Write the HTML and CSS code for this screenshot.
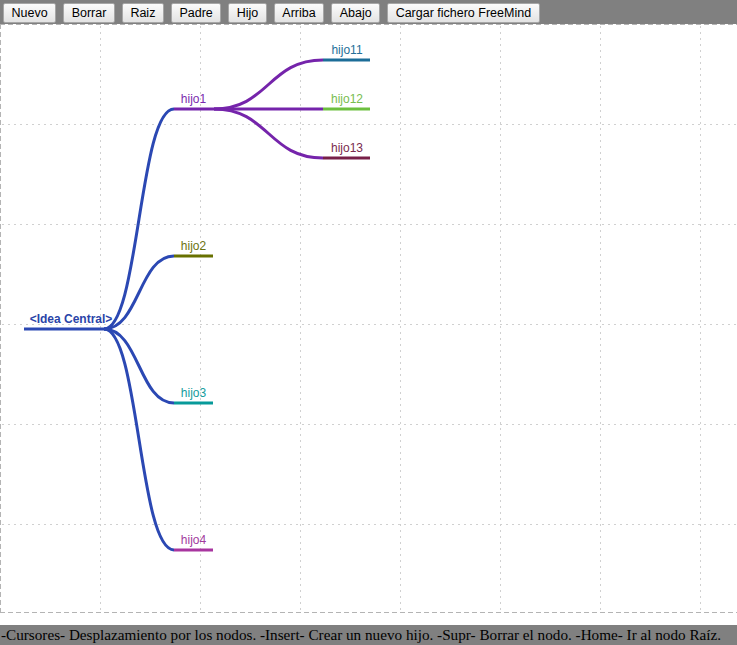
FILE: index.html
```html
<!DOCTYPE html>
<html lang="es">
<head>
<meta charset="utf-8">
<title>Mapa mental</title>
<link rel="stylesheet" href="styles.css">
</head>
<body>
<div class="toolbar">
  <button class="btn">Nuevo</button>
  <button class="btn">Borrar</button>
  <button class="btn">Raiz</button>
  <button class="btn">Padre</button>
  <button class="btn">Hijo</button>
  <button class="btn">Arriba</button>
  <button class="btn">Abajo</button>
  <button class="btn">Cargar fichero FreeMind</button>
</div>
<svg class="canvas" width="737" height="589" viewBox="0 0 737 589" xmlns="http://www.w3.org/2000/svg">
  <g class="frame">
    <line x1="0" y1="0.5" x2="737" y2="0.5"/>
    <line x1="0.5" y1="0" x2="0.5" y2="589"/>
    <line x1="0" y1="588.5" x2="737" y2="588.5"/>
  </g>
  <g class="grid">
    <line x1="100.5" y1="2" x2="100.5" y2="588"/>
    <line x1="200.5" y1="2" x2="200.5" y2="588"/>
    <line x1="300.5" y1="2" x2="300.5" y2="588"/>
    <line x1="400.5" y1="2" x2="400.5" y2="588"/>
    <line x1="500.5" y1="2" x2="500.5" y2="588"/>
    <line x1="600.5" y1="2" x2="600.5" y2="588"/>
    <line x1="700.5" y1="2" x2="700.5" y2="588"/>
    <line x1="2" y1="100.5" x2="737" y2="100.5"/>
    <line x1="2" y1="200.5" x2="737" y2="200.5"/>
    <line x1="2" y1="300.5" x2="737" y2="300.5"/>
    <line x1="2" y1="400.5" x2="737" y2="400.5"/>
    <line x1="2" y1="500.5" x2="737" y2="500.5"/>
  </g>
  <g class="links">
    <path class="c-root" d="M24 305 H104"/>
    <path class="c-root" d="M104 305 C139 305 139 85 174 85"/>
    <path class="c-root" d="M104 305 C139 305 139 232 174 232"/>
    <path class="c-root" d="M104 305 C139 305 139 379 174 379"/>
    <path class="c-root" d="M104 305 C139 305 139 526 174 526"/>
    <path class="c-h1" d="M174 85 H323"/>
    <path class="c-h1" d="M214 85 C268.5 85 268.5 36 323 36"/>
    <path class="c-h1" d="M214 85 C268.5 85 268.5 134 323 134"/>
    <path class="c-h2" d="M174 232 H213"/>
    <path class="c-h3" d="M174 379 H213"/>
    <path class="c-h4" d="M174 526 H213"/>
    <path class="c-h11" d="M323 36 H370"/>
    <path class="c-h12" d="M323 85 H370"/>
    <path class="c-h13" d="M323 134 H370"/>
  </g>
  <g class="labels">
    <text class="t-root" x="71" y="299">&lt;Idea Central&gt;</text>
    <text class="t-h1" x="193.5" y="79">hijo1</text>
    <text class="t-h2" x="193.5" y="226">hijo2</text>
    <text class="t-h3" x="193.5" y="373">hijo3</text>
    <text class="t-h4" x="193.5" y="520">hijo4</text>
    <text class="t-h11" x="347" y="30">hijo11</text>
    <text class="t-h12" x="347" y="79">hijo12</text>
    <text class="t-h13" x="347" y="128">hijo13</text>
  </g>
</svg>
<div class="footer">-Cursores- Desplazamiento por los nodos. -Insert- Crear un nuevo hijo. -Supr- Borrar el nodo. -Home- Ir al nodo Raíz.</div>
</body>
</html>
```
FILE: styles.css
```css
html, body {
  margin: 0;
  padding: 0;
  background: #ffffff;
  overflow: hidden;
}

.toolbar {
  height: 24px;
  box-sizing: border-box;
  background: #808080;
  display: flex;
  align-items: flex-start;
  gap: 7px;
  padding: 3px 0 0 3px;
}

.btn {
  height: 20px;
  margin: 0;
  padding: 0 7.5px;
  box-sizing: border-box;
  font-family: "Liberation Sans", Arial, sans-serif;
  font-size: 12.5px;
  line-height: 18px;
  color: #000;
  background: linear-gradient(#fbfbfb, #e3e3e3);
  border: 1px solid #a6a6a6;
  border-radius: 2px;
  white-space: nowrap;
}

.canvas {
  display: block;
}

.frame line {
  stroke: #b4b4b4;
  stroke-width: 1;
  stroke-dasharray: 5 3;
}

.grid line {
  stroke: #d0d0d0;
  stroke-width: 1;
  stroke-dasharray: 2 4;
}

.links path {
  fill: none;
  stroke-width: 3;
}

.c-root { stroke: #2b48b3; }
.c-h1 { stroke: #7524ab; }
.c-h2 { stroke: #687100; }
.c-h3 { stroke: #079a9a; }
.c-h4 { stroke: #a8359f; }
.c-h11 { stroke: #1c6d98; }
.c-h12 { stroke: #6cbf3f; }
.c-h13 { stroke: #771f48; }

.labels text {
  font-family: "Liberation Sans", Arial, sans-serif;
  font-size: 12px;
  text-anchor: middle;
}

.t-root { fill: #2a44a8; font-weight: bold; }
.t-h1 { fill: #7a2aae; }
.t-h2 { fill: #6b7410; }
.t-h3 { fill: #139c9c; }
.t-h4 { fill: #a23a9d; }
.t-h11 { fill: #246f98; }
.t-h12 { fill: #77bd4f; }
.t-h13 { fill: #7a2a4e; }

.footer {
  margin-top: 12px;
  height: 20px;
  background: #808080;
  color: #000;
  font-family: "Liberation Serif", "Times New Roman", serif;
  font-size: 15.2px;
  line-height: 20px;
  padding-left: 1px;
  white-space: nowrap;
}
```
